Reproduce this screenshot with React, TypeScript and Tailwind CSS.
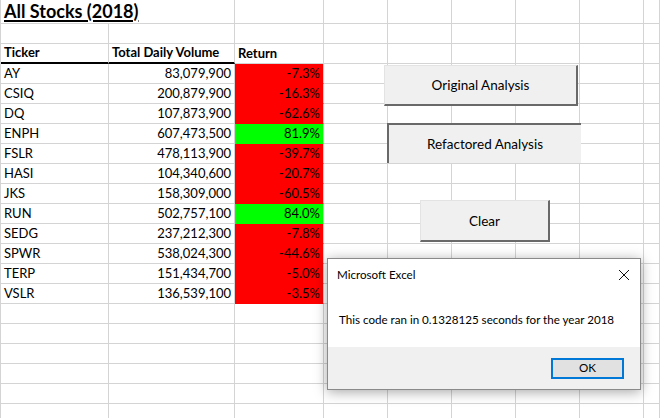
import React from "react";

const rows: [string, string, string, "r" | "g"][] = [
  ["AY", "83,079,900", "-7.3%", "r"],
  ["CSIQ", "200,879,900", "-16.3%", "r"],
  ["DQ", "107,873,900", "-62.6%", "r"],
  ["ENPH", "607,473,500", "81.9%", "g"],
  ["FSLR", "478,113,900", "-39.7%", "r"],
  ["HASI", "104,340,600", "-20.7%", "r"],
  ["JKS", "158,309,000", "-60.5%", "r"],
  ["RUN", "502,757,100", "84.0%", "g"],
  ["SEDG", "237,212,300", "-7.8%", "r"],
  ["SPWR", "538,024,300", "-44.6%", "r"],
  ["TERP", "151,434,700", "-5.0%", "r"],
  ["VSLR", "136,539,100", "-3.5%", "r"],
];

const cols = "grid grid-cols-[108px_126px_89px_64px_64px_64px_64px_64px_1fr]";
const cell = "border-r border-b border-[#d4d4d4] flex items-end pb-[2px] overflow-hidden whitespace-nowrap";

function EmptyCells({ n }: { n: number }) {
  return (
    <>
      {Array.from({ length: n }).map((_, i) => (
        <div key={i} className={cell} />
      ))}
    </>
  );
}

export default function App() {
  return (
    <div className="relative w-[660px] h-[418px] overflow-hidden bg-white text-black font-['Lato',sans-serif] text-[13px] leading-[16px]">
      <div className="border-l border-[#d4d4d4] w-full">
        {/* title row */}
        <div className={`${cols} h-[24px]`}>
          <div className={`${cell} col-span-2 pl-[3px] pb-[1px]`}>
            <span className="font-bold text-[18px] leading-[20px] underline underline-offset-[2px] decoration-[1.5px]">
              All Stocks (2018)
            </span>
          </div>
          <EmptyCells n={7} />
        </div>
        {/* empty row */}
        <div className={`${cols} h-[20px]`}>
          <EmptyCells n={9} />
        </div>
        {/* header */}
        <div className={`${cols} h-[20px]`}>
          <div className={`${cell} pl-[3px] font-bold border-b-2 border-b-black`}>Ticker</div>
          <div className={`${cell} pl-[3px] font-bold border-b-2 border-b-black`}>Total Daily Volume</div>
          <div className={`${cell} pl-[3px] font-bold`}>Return</div>
          <EmptyCells n={6} />
        </div>
        {rows.map(([t, v, r, c]) => (
          <div key={t} className={`${cols} h-[20px]`}>
            <div className={`${cell} pl-[3px]`}>{t}</div>
            <div className={`${cell} justify-end pr-[3px]`}>{v}</div>
            <div
              className={`${cell} justify-end pr-[3px] ${
                c === "r" ? "bg-[#ff0000] border-b-[#ff0000]" : "bg-[#00ff00] border-b-[#00ff00]"
              }`}
            >
              {r}
            </div>
            <EmptyCells n={6} />
          </div>
        ))}
        {Array.from({ length: 6 }).map((_, i) => (
          <div key={i} className={`${cols} h-[20px]`}>
            <EmptyCells n={9} />
          </div>
        ))}
      </div>

      {/* buttons */}
      <div className="absolute left-[384px] top-[65px] w-[194px] h-[41px] bg-[#f0f0f0] border-t border-l border-t-[#e3e3e3] border-l-[#e3e3e3] border-b-2 border-r-2 border-b-[#696969] border-r-[#696969] flex items-center justify-center text-[13.5px]">
        Original Analysis
      </div>
      <div className="absolute left-[387px] top-[123px] w-[194px] h-[40px] bg-[#f0f0f0] border-t-2 border-l-2 border-t-[#696969] border-l-[#696969] flex items-center justify-center text-[13.5px]">
        Refactored Analysis
      </div>
      <div className="absolute left-[420px] top-[200px] w-[130px] h-[42px] bg-[#f0f0f0] border-t border-l border-t-[#e3e3e3] border-l-[#e3e3e3] border-b-2 border-r-2 border-b-[#696969] border-r-[#696969] flex items-center justify-center text-[13.5px]">
        Clear
      </div>

      {/* dialog */}
      <div className="absolute left-[327px] top-[258px] w-[314px] h-[132px] bg-white border border-[#8a8a8a] shadow-[0_2px_12px_rgba(0,0,0,0.35)] flex flex-col font-['Lato',sans-serif] text-[11.6px] leading-[16px]">
        <div className="h-[32px] flex items-center justify-between pl-[9px] pr-[9px]">
          <span>Microsoft Excel</span>
          <svg width="12" height="12" viewBox="0 0 12 12" className="mr-[1px]">
            <path d="M1 1 L11 11 M11 1 L1 11" stroke="#111" strokeWidth="1" />
          </svg>
        </div>
        <div className="flex-1 pl-[11px] pt-[21px]">This code ran in 0.1328125 seconds for the year 2018</div>
        <div className="h-[42px] bg-[#f0f0f0] flex items-center justify-end pr-[16px]">
          <div className="w-[73px] h-[21px] border-2 border-[#0078d7] bg-[#e1e1e1] flex items-center justify-center">
            OK
          </div>
        </div>
      </div>
    </div>
  );
}
